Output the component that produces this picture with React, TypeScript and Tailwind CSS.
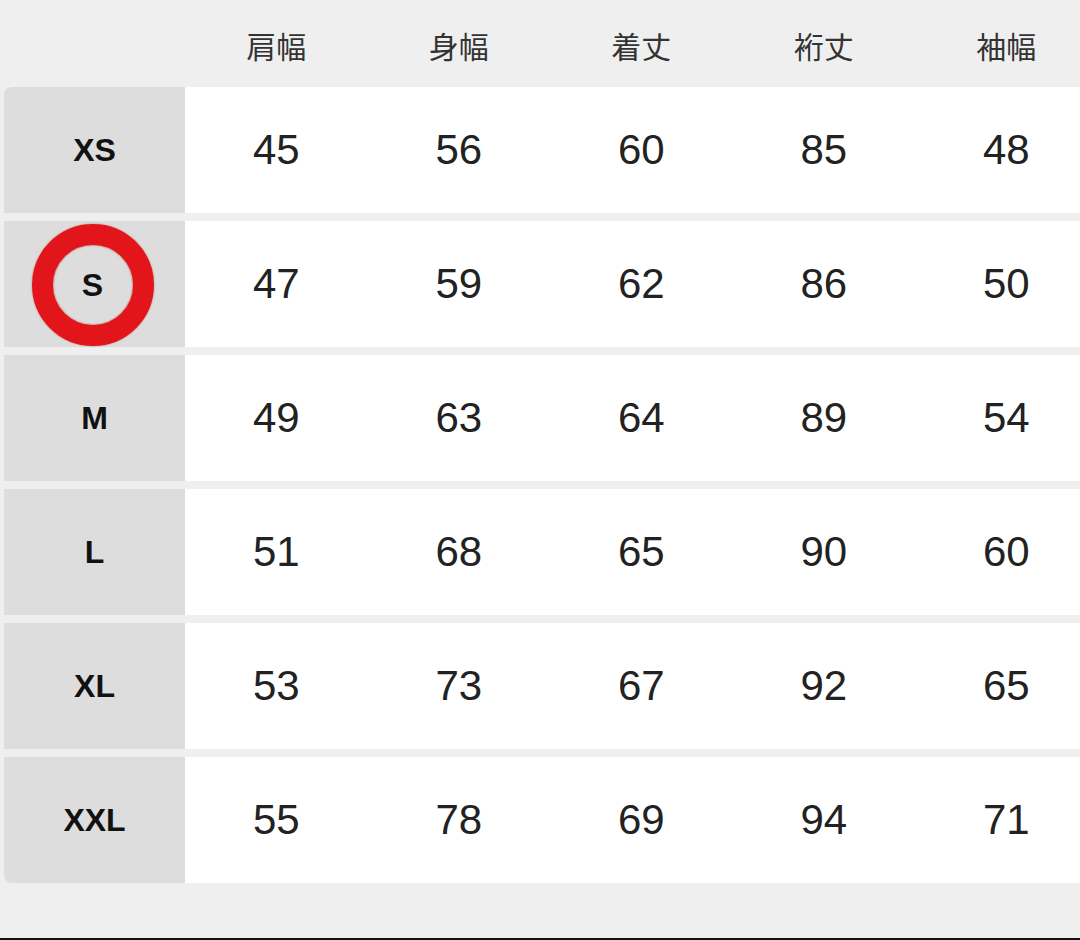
const headers = ['肩幅', '身幅', '着丈', '裄丈', '袖幅'];

const rows: { size: string; values: number[] }[] = [
  { size: 'XS', values: [45, 56, 60, 85, 48] },
  { size: 'S', values: [47, 59, 62, 86, 50] },
  { size: 'M', values: [49, 63, 64, 89, 54] },
  { size: 'L', values: [51, 68, 65, 90, 60] },
  { size: 'XL', values: [53, 73, 67, 92, 65] },
  { size: 'XXL', values: [55, 78, 69, 94, 71] },
];

export default function App() {
  return (
    <div className="w-[1080px] h-[940px] bg-[#efefef] overflow-hidden flex flex-col font-['Liberation_Sans','Noto_Sans_CJK_JP',sans-serif]">
      <div className="flex-1 pl-[4px]">
        {/* Header */}
        <div className="grid grid-cols-[181px_repeat(5,182.5px)] h-[87px] items-center">
          <div />
          {headers.map(h => (
            <div
              key={h}
              className="text-center text-[30px] leading-none text-[#333] font-['Noto_Sans_CJK_JP',sans-serif] pt-[2px]"
            >
              {h}
            </div>
          ))}
        </div>

        {/* Rows */}
        <div className="flex flex-col gap-[8px] w-[1094px]">
          {rows.map((r, i) => (
            <div key={r.size} className="grid grid-cols-[181px_repeat(5,182.5px)] h-[126px]">
              <div
                className={
                  'bg-[#dddddd] flex items-center justify-center ' +
                  (i === 0 ? 'rounded-tl-[8px] ' : '') +
                  (i === rows.length - 1 ? 'rounded-bl-[8px]' : '')
                }
              >
                {r.size === 'S' ? (
                  <div className="w-[122px] h-[122px] rounded-full border-[21px] border-[#e2161a] shadow-[inset_0_0_2px_rgba(150,0,0,0.6),0_0_2px_rgba(180,0,0,0.5)] flex items-center justify-center mr-[4px] mt-[2px]">
                    <span className="text-[32px] font-bold text-[#111] leading-none">S</span>
                  </div>
                ) : (
                  <span className="text-[32px] font-bold text-[#111] leading-none">{r.size}</span>
                )}
              </div>
              {r.values.map((v, j) => (
                <div key={j} className="bg-white flex items-center justify-center">
                  <span className="text-[42px] text-[#222] leading-none">{v}</span>
                </div>
              ))}
            </div>
          ))}
        </div>
      </div>
      <div className="h-[2px] bg-[#111]" />
    </div>
  );
}
